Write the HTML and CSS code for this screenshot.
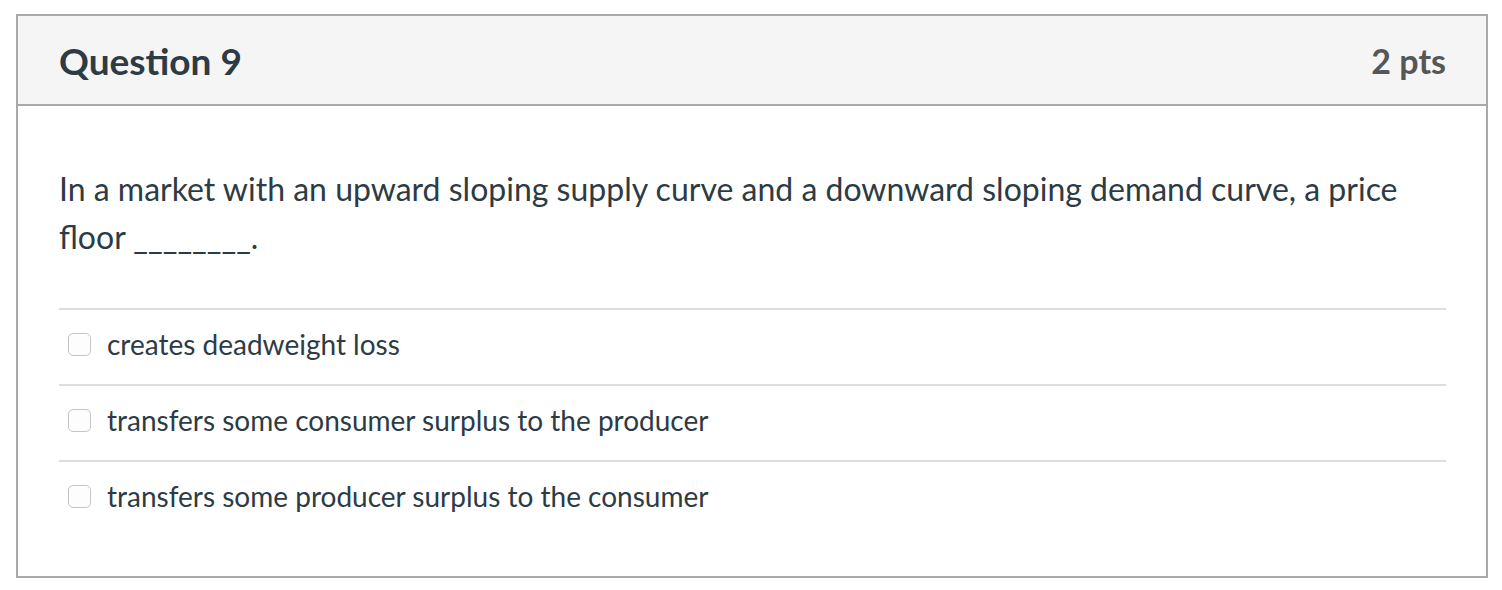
FILE: index.html
```html
<!DOCTYPE html>
<html>
<head>
<meta charset="utf-8">
<link rel="stylesheet" href="styles.css">
</head>
<body>
<div class="question">
  <div class="header">
    <div class="title">Question 9</div>
    <div class="pts">2 pts</div>
  </div>
  <div class="content">
    <div class="text">In a market with an upward sloping supply curve and a downward sloping demand curve, a price floor ________.</div>
    <div class="answers">
      <div class="answer"><span class="box"></span><span class="label">creates deadweight loss</span></div>
      <div class="answer"><span class="box"></span><span class="label">transfers some consumer surplus to the producer</span></div>
      <div class="answer"><span class="box"></span><span class="label">transfers some producer surplus to the consumer</span></div>
    </div>
  </div>
</div>
</body>
</html>
```
FILE: styles.css
```css
html, body {
  margin: 0;
  padding: 0;
  background: #ffffff;
}
body {
  padding: 14px 14px 0 16px;
  font-family: Lato, "Noto Sans", sans-serif;
  color: #2d3b45;
}
.question {
  width: 1472px;
  height: 564px;
  box-sizing: border-box;
  border: 2px solid #a9a9a9;
}
.header {
  height: 90px;
  box-sizing: border-box;
  background: #f5f5f5;
  border-bottom: 2px solid #a9a9a9;
  display: flex;
  align-items: center;
  justify-content: space-between;
  padding: 0 40px 0 41px;
}
.title {
  font-size: 37px;
  font-weight: 700;
  color: #2d3b45;
}
.pts {
  font-size: 34px;
  font-weight: 700;
  color: #565656;
}
.content {
  padding: 59px 40px 0 41px;
}
.text {
  font-size: 32px;
  line-height: 48px;
}
.answers {
  margin-top: 47px;
}
.answer {
  border-top: 2px solid #dddddd;
  height: 74px;
  box-sizing: content-box;
  display: flex;
  align-items: center;
  padding-left: 9px;
}
.answer-inner {
  display: flex;
}
.box {
  width: 21px;
  height: 21px;
  border: 1.5px solid #c4c4c4;
  border-radius: 5px;
  background: #fdfdfd;
  margin-right: 16px;
  margin-bottom: 6px;
  flex-shrink: 0;
}
.label {
  font-size: 28px;
  margin-bottom: 6px;
}
```
